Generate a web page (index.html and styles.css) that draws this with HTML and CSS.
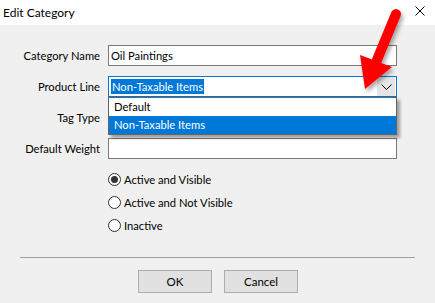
FILE: index.html
```html
<!DOCTYPE html>
<html lang="en">

<head>
    <meta charset="UTF-8">
    <title>Edit Category</title>
    <link rel="stylesheet" href="styles.css">
</head>

<body>
    <!-- Title bar -->
    <div class="title-bar">
        <span class="title">Edit Category</span>
        <svg class="close" width="10" height="10" viewBox="0 0 10 10">
            <path d="M0.5 0.5 L9.5 9.5 M9.5 0.5 L0.5 9.5" stroke="#000" stroke-width="1" />
        </svg>
    </div>

    <div class="dialog">
        <div class="form">
            <div class="row">
                <label>Category Name</label>
                <div class="field">Oil Paintings</div>
            </div>
            <div class="row">
                <label>Product Line</label>
                <div class="field combo focused">
                    <span class="selected">Non-Taxable Items</span>
                    <span class="drop-btn">
                        <svg width="11" height="6" viewBox="0 0 11 6">
                            <path d="M0.5 0.5 L5.5 5.5 L10.5 0.5" fill="none" stroke="#000" stroke-width="1" />
                        </svg>
                    </span>
                    <ul class="drop-list">
                        <li>Default</li>
                        <li class="active">Non-Taxable Items</li>
                    </ul>
                </div>
            </div>
            <div class="row">
                <label>Tag Type</label>
                <div class="field combo"></div>
            </div>
            <div class="row">
                <label>Default Weight</label>
                <div class="field"></div>
            </div>
        </div>

        <div class="radios">
            <div class="radio checked"><span class="dot"></span>Active and Visible</div>
            <div class="radio"><span class="dot"></span>Active and Not Visible</div>
            <div class="radio"><span class="dot"></span>Inactive</div>
        </div>

        <div class="separator"></div>

        <div class="buttons">
            <button>OK</button>
            <button>Cancel</button>
        </div>
    </div>

    <!-- Red annotation arrow -->
    <svg class="arrow" width="435" height="303" viewBox="0 0 435 303">
        <defs>
            <filter id="shadow" x="-50%" y="-50%" width="200%" height="200%">
                <feDropShadow dx="2" dy="3" stdDeviation="2" flood-color="#000" flood-opacity="0.35" />
            </filter>
        </defs>
        <g filter="url(#shadow)" fill="#f00">
            <line x1="396" y1="14" x2="377" y2="60" stroke="#f00" stroke-width="10" stroke-linecap="round" />
            <polygon points="360,55 392,67 365,89" />
        </g>
    </svg>
</body>

</html>
```

FILE: styles.css
```css
body {
    font-family: Lato, "Noto Sans", sans-serif;
    font-size: 11.2px;
    margin: 0;
    padding: 0;
    width: 435px;
    height: 303px;
    background-color: #f0f0f0;
    color: #000;
    overflow: hidden;
}

/* Title bar */
.title-bar {
    height: 25px;
    background-color: #fff;
    display: flex;
    align-items: center;
    justify-content: space-between;
    padding: 0 10px 0 3px;
    font-size: 12px;
}

.title {
    margin-top: -1px;
}

.close {
    margin-top: -4px;
}

/* Form */
.form {
    padding-top: 20px;
    display: flex;
    flex-direction: column;
    gap: 10px;
}

.row {
    display: flex;
    align-items: center;
    gap: 8px;
}

.row label {
    width: 100px;
    text-align: right;
}

.field {
    position: relative;
    width: 289px;
    height: 21px;
    box-sizing: border-box;
    border: 1px solid #7a7a7a;
    background-color: #fff;
    padding: 0 2px;
    display: flex;
    align-items: center;
}

.combo.focused {
    border-color: #0078d7;
}

.selected {
    background-color: #0078d7;
    color: #fff;
    line-height: 15px;
    padding: 0 1px;
}

.drop-btn {
    margin-left: auto;
    margin-right: -1px;
    width: 18px;
    height: 19px;
    background-color: #e5e5e5;
    display: flex;
    align-items: center;
    justify-content: center;
}

.drop-list {
    position: absolute;
    top: 20px;
    left: -1px;
    width: 289px;
    box-sizing: border-box;
    margin: 0;
    padding: 0;
    list-style: none;
    background-color: #fff;
    border: 1px solid #646464;
    box-shadow: 3px 3px 3px rgba(0, 0, 0, 0.35);
    z-index: 10;
}

.drop-list li {
    height: 18px;
    line-height: 18px;
    padding-left: 5px;
}

.drop-list li.active {
    background-color: #0078d7;
    color: #fff;
}

/* Radio buttons */
.radios {
    padding: 9px 0 0 108px;
}

.radio {
    height: 23px;
    display: flex;
    align-items: center;
}

.dot {
    width: 13px;
    height: 13px;
    box-sizing: border-box;
    border: 1px solid #333;
    border-radius: 50%;
    background-color: #fff;
    margin-right: 3px;
    display: flex;
    align-items: center;
    justify-content: center;
}

.checked .dot::after {
    content: "";
    width: 7px;
    height: 7px;
    border-radius: 50%;
    background-color: #333;
}

.separator {
    margin: 20px 20px 0 20px;
    height: 1px;
    background-color: #a0a0a0;
}

/* Buttons */
.buttons {
    padding: 12px 0 0 138px;
    display: flex;
    gap: 12px;
}

.buttons button {
    width: 74px;
    height: 23px;
    font-family: Lato, "Noto Sans", sans-serif;
    font-size: 11.5px;
    background-color: #e1e1e1;
    border: 1px solid #adadad;
    padding: 0;
}

.arrow {
    position: absolute;
    top: 0;
    left: 0;
    pointer-events: none;
    z-index: 20;
}
```
